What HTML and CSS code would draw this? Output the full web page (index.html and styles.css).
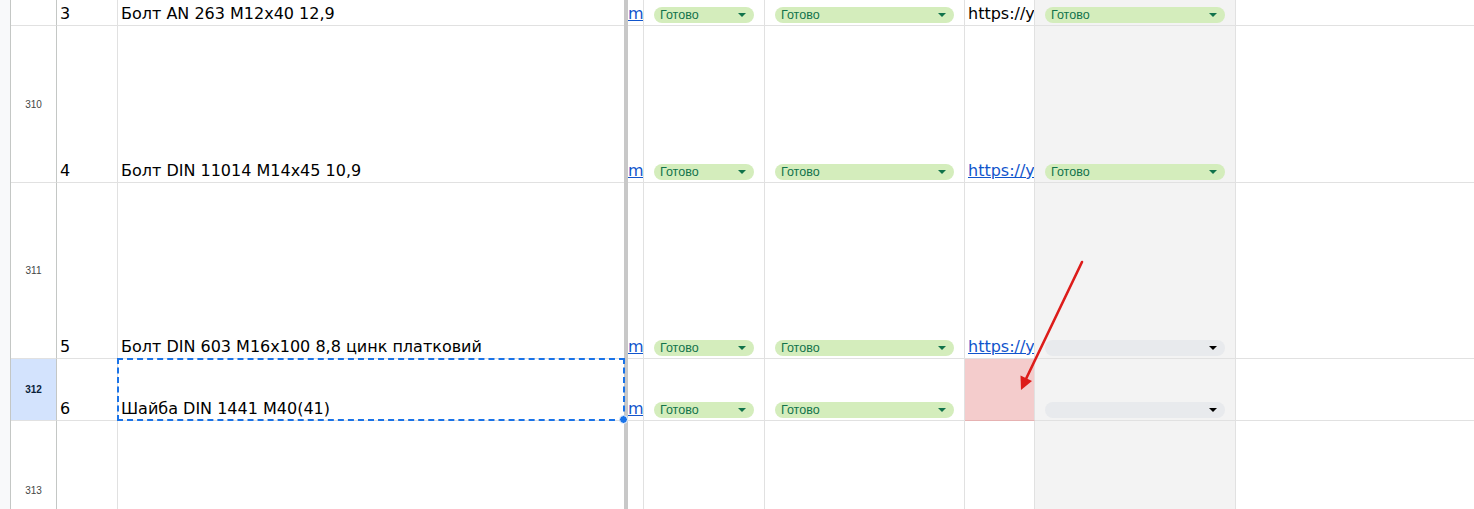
FILE: index.html
```html
<!DOCTYPE html>
<html>
<head>
<meta charset="utf-8">
<link rel="stylesheet" href="styles.css">
</head>
<body>
<div class="sheet">
  <div class="row r309">
    <div class="strip"></div>
    <div class="rh"></div>
    <div class="c a"><span>3</span></div>
    <div class="c b"><span>Болт AN 263 M12x40 12,9</span></div>
    <div class="freeze"></div>
    <div class="c cl"><span class="lnk">m</span></div>
    <div class="c d"><span class="chip">Готово<i class="tri"></i></span></div>
    <div class="c e"><span class="chip">Готово<i class="tri"></i></span></div>
    <div class="c f"><span class="url plain">https://y</span></div>
    <div class="c g"><span class="chip">Готово<i class="tri"></i></span></div>
    <div class="c h"></div>
  </div>
  <div class="row r310">
    <div class="strip"></div>
    <div class="rh"><span>310</span></div>
    <div class="c a"><span>4</span></div>
    <div class="c b"><span>Болт DIN 11014 M14x45 10,9</span></div>
    <div class="freeze"></div>
    <div class="c cl"><span class="lnk">m</span></div>
    <div class="c d"><span class="chip">Готово<i class="tri"></i></span></div>
    <div class="c e"><span class="chip">Готово<i class="tri"></i></span></div>
    <div class="c f"><span class="url">https://y</span></div>
    <div class="c g"><span class="chip">Готово<i class="tri"></i></span></div>
    <div class="c h"></div>
  </div>
  <div class="row r311">
    <div class="strip"></div>
    <div class="rh"><span>311</span></div>
    <div class="c a"><span>5</span></div>
    <div class="c b"><span>Болт DIN 603 M16x100 8,8 цинк платковий</span></div>
    <div class="freeze"></div>
    <div class="c cl"><span class="lnk">m</span></div>
    <div class="c d"><span class="chip">Готово<i class="tri"></i></span></div>
    <div class="c e"><span class="chip">Готово<i class="tri"></i></span></div>
    <div class="c f"><span class="url">https://y</span></div>
    <div class="c g"><span class="chip empty"><i class="tri"></i></span></div>
    <div class="c h"></div>
  </div>
  <div class="row r312">
    <div class="strip"></div>
    <div class="rh sel"><span>312</span></div>
    <div class="c a"><span>6</span></div>
    <div class="c b"><span>Шайба DIN 1441 M40(41)</span><div class="selection"><i class="handle"></i></div></div>
    <div class="freeze"></div>
    <div class="c cl"><span class="lnk">m</span></div>
    <div class="c d"><span class="chip">Готово<i class="tri"></i></span></div>
    <div class="c e"><span class="chip">Готово<i class="tri"></i></span></div>
    <div class="c f red"></div>
    <div class="c g"><span class="chip empty"><i class="tri"></i></span></div>
    <div class="c h"></div>
  </div>
  <div class="row r313">
    <div class="strip"></div>
    <div class="rh"><span>313</span></div>
    <div class="c a"></div>
    <div class="c b"></div>
    <div class="freeze"></div>
    <div class="c cl"></div>
    <div class="c d"></div>
    <div class="c e"></div>
    <div class="c f"></div>
    <div class="c g"></div>
    <div class="c h"></div>
  </div>
  <svg class="arrow" width="1474" height="509" viewBox="0 0 1474 509">
    <line x1="1082" y1="262" x2="1025" y2="381" stroke="#dd1c1a" stroke-width="2.6" stroke-linecap="round"/>
    <polygon points="1021,390 1020.5,375.5 1032,381" fill="#dd1c1a"/>
  </svg>
</div>
</body>
</html>
```
FILE: styles.css
```css
* { box-sizing: border-box; }
html, body { margin: 0; padding: 0; background: #fff; overflow: hidden; }
.sheet {
  position: relative;
  width: 1474px;
  height: 509px;
  overflow: hidden;
  font-family: "DejaVu Sans", Verdana, sans-serif;
  font-size: 16px;
  color: #000;
}
.row {
  display: grid;
  grid-template-columns: 11px 46px 61px 506px 4px 16px 121px 200px 70px 201px 1fr;
}
.r309 { height: 26px; }
.r310 { height: 157px; }
.r311 { height: 176px; }
.r312 { height: 62px; }
.r313 { height: 140px; }

.strip {
  background: #f8f9fa;
  border-right: 1px solid #c4c7c5;
}
.rh {
  border-right: 1px solid #c4c7c5;
  border-bottom: 1px solid #e1e1e1;
  display: flex;
  align-items: center;
  justify-content: center;
  font-family: "Liberation Sans", Arial, sans-serif;
  font-size: 10px;
  color: #444746;
}
.rh.sel {
  background: #d3e3fd;
  color: #0b1f3a;
  font-weight: bold;
}
.freeze { background: #c8c8c8; }

.c {
  position: relative;
  border-right: 1px solid #e1e1e1;
  border-bottom: 1px solid #e1e1e1;
  display: flex;
  align-items: flex-end;
  padding: 0 3px 2px 3px;
  overflow: hidden;
  white-space: nowrap;
  line-height: 18px;
}
.c.b { border-right: none; overflow: visible; }
.c.cl { padding: 0 0 2px 0; }
.c.h { border-right: none; }
.c.g { background: #f3f3f3; }
.c.f.red { background: #f4cccc; border-bottom-color: #e6b2b2; }

.lnk, .url {
  color: #1155cc;
  text-decoration: underline;
}
.url.plain { color: #000; text-decoration: none; }

.c.d, .c.e, .c.g { padding: 0 10px 2px 10px; }
.chip {
  position: relative;
  width: 100%;
  height: 16px;
  border-radius: 8px;
  background: #d4edbc;
  color: #11734b;
  font-family: "Liberation Sans", Arial, sans-serif;
  font-size: 12.5px;
  line-height: 17px;
  padding-left: 6px;
}
.chip.empty { background: #e8eaed; }
.tri {
  position: absolute;
  right: 8px;
  top: 6px;
  width: 0;
  height: 0;
  border-left: 4px solid transparent;
  border-right: 4px solid transparent;
  border-top: 4px solid #11734b;
}
.chip.empty .tri { border-top-color: #000; }

.selection {
  position: absolute;
  left: -1px;
  top: -1px;
  right: -1px;
  bottom: -1px;
  border: 2px dashed #1a73e8;
  pointer-events: none;
}
.handle {
  position: absolute;
  right: -5px;
  bottom: -5px;
  width: 7px;
  height: 7px;
  border-radius: 50%;
  background: #1a73e8;
  border: 1px solid #fff;
  box-sizing: content-box;
}
.arrow {
  position: absolute;
  left: 0;
  top: 0;
  pointer-events: none;
}
```
